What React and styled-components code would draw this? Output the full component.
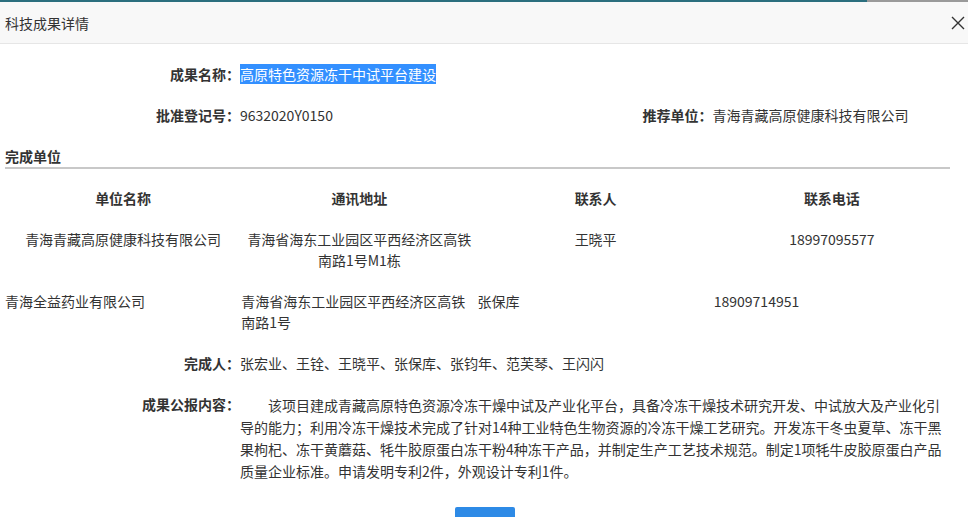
import React from 'react'
import styled, { createGlobalStyle } from 'styled-components';

const GlobalStyle = createGlobalStyle`
    body {
        margin: 0;
        background: #fff;
        font-family: "Noto Sans CJK SC", "Noto Sans", sans-serif;
        font-size: 14px;
        color: #333;
    }
`;

const units = [
    {
        name: '青海青藏高原健康科技有限公司',
        address: '青海省海东工业园区平西经济区高铁南路1号M1栋',
        contact: '王晓平',
        phone: '18997095577',
        centered: true,
    },
    {
        name: '青海全益药业有限公司',
        address: '青海省海东工业园区平西经济区高铁南路1号',
        contact: '张保库',
        phone: '18909714951',
        centered: false,
    },
];

const App = () => {
    return (
        <>
            <GlobalStyle />
            <StyledStrip>
                <div className="main"></div>
                <div className="rest"></div>
            </StyledStrip>
            <StyledHeader>
                <span>科技成果详情</span>
                <CloseButton aria-label="关闭">
                    <svg width="14" height="14" viewBox="0 0 14 14">
                        <path d="M1 1 L13 13 M13 1 L1 13" stroke="#333" strokeWidth="1.4" fill="none" />
                    </svg>
                </CloseButton>
            </StyledHeader>
            <StyledBody>
                <InfoGrid>
                    <Label>成果名称：</Label>
                    <Value $span>
                        <Selected>高原特色资源冻干中试平台建设</Selected>
                    </Value>
                    <Label>批准登记号：</Label>
                    <Value>9632020Y0150</Value>
                    <Label>推荐单位：</Label>
                    <Value>青海青藏高原健康科技有限公司</Value>
                </InfoGrid>

                <SectionTitle>完成单位</SectionTitle>

                <UnitTable>
                    <TableRow $centered>
                        <HeadCell>单位名称</HeadCell>
                        <HeadCell>通讯地址</HeadCell>
                        <HeadCell>联系人</HeadCell>
                        <HeadCell>联系电话</HeadCell>
                    </TableRow>
                    {units.map((u) => (
                        <TableRow key={u.name} $centered={u.centered}>
                            <Cell>{u.name}</Cell>
                            <Cell>{u.address}</Cell>
                            <Cell>{u.contact}</Cell>
                            <Cell>{u.phone}</Cell>
                        </TableRow>
                    ))}
                </UnitTable>

                <InfoGrid>
                    <Label>完成人：</Label>
                    <Value $span>张宏业、王铨、王晓平、张保库、张钧年、范芙琴、王闪闪</Value>
                </InfoGrid>

                <SummaryRow>
                    <Label>成果公报内容：</Label>
                    <Summary>
                        该项目建成青藏高原特色资源冷冻干燥中试及产业化平台，具备冷冻干燥技术研究开发、中试放大及产业化引导的能力；利用冷冻干燥技术完成了针对14种工业特色生物资源的冷冻干燥工艺研究。开发冻干冬虫夏草、冻干黑果枸杞、冻干黄蘑菇、牦牛胶原蛋白冻干粉4种冻干产品，并制定生产工艺技术规范。制定1项牦牛皮胶原蛋白产品质量企业标准。申请发明专利2件，外观设计专利1件。
                    </Summary>
                </SummaryRow>

                <Footer>
                    <PrimaryButton>关闭</PrimaryButton>
                </Footer>
            </StyledBody>
        </>
    )
}

const StyledStrip = styled.div`
    display: flex;
    height: 2px;

    .main {
        width: 867px;
        background: #2b6f7e;
    }

    .rest {
        flex: 1;
        background: #9a9a9a;
    }
`;

const StyledHeader = styled.div`
    height: 41px;
    padding: 0 3px 0 5px;
    display: flex;
    align-items: center;
    justify-content: space-between;
    background: #f8f8f8;
    border-bottom: 1px solid #e6e6e6;
    font-size: 14px;
    color: #333;
`;

const CloseButton = styled.button`
    border: none;
    background: transparent;
    padding: 0;
    width: 14px;
    height: 14px;
    display: flex;
    cursor: pointer;
`;

const StyledBody = styled.div`
    padding: 10px 18px 0 5px;
`;

const InfoGrid = styled.div`
    display: grid;
    grid-template-columns: 235px 1fr 235px 1fr;
`;

const Label = styled.div`
    height: 21px;
    padding: 10px 0;
    line-height: 21px;
    text-align: right;
    font-weight: bold;
    white-space: nowrap;
`;

const Value = styled.div`
    padding: 10px 0;
    line-height: 21px;
    grid-column: ${(p) => (p.$span ? 'span 3' : 'auto')};
`;

const Selected = styled.span`
    background: #3390ff;
    color: #fff;
`;

const SectionTitle = styled.div`
    padding: 10px 0 1px;
    line-height: 20px;
    font-weight: bold;
    border-bottom: 2px solid #c8c8c8;
`;

const UnitTable = styled.div`
    margin-top: 9px;
`;

const TableRow = styled.div`
    display: grid;
    grid-template-columns: repeat(4, 1fr);
    text-align: ${(p) => (p.$centered ? 'center' : 'left')};

    & > div {
        padding: ${(p) => (p.$centered ? '10px 5px' : '10px 0')};
    }
`;

const HeadCell = styled.div`
    line-height: 21px;
    font-weight: bold;
`;

const Cell = styled.div`
    line-height: 21px;
`;

const SummaryRow = styled.div`
    display: grid;
    grid-template-columns: 235px 704px;
`;

const Summary = styled.div`
    padding: 10px 0;
    line-height: 22px;
    text-indent: 2em;
`;

const Footer = styled.div`
    display: flex;
    justify-content: center;
    padding: 15px 0 0 14px;
`;

const PrimaryButton = styled.button`
    width: 60px;
    height: 40px;
    border: none;
    border-radius: 2px;
    background: #2d8ae6;
    color: #fff;
    font-family: inherit;
    font-size: 14px;
    line-height: 20px;
    padding: 12px 0 8px;
`;

export default App;
